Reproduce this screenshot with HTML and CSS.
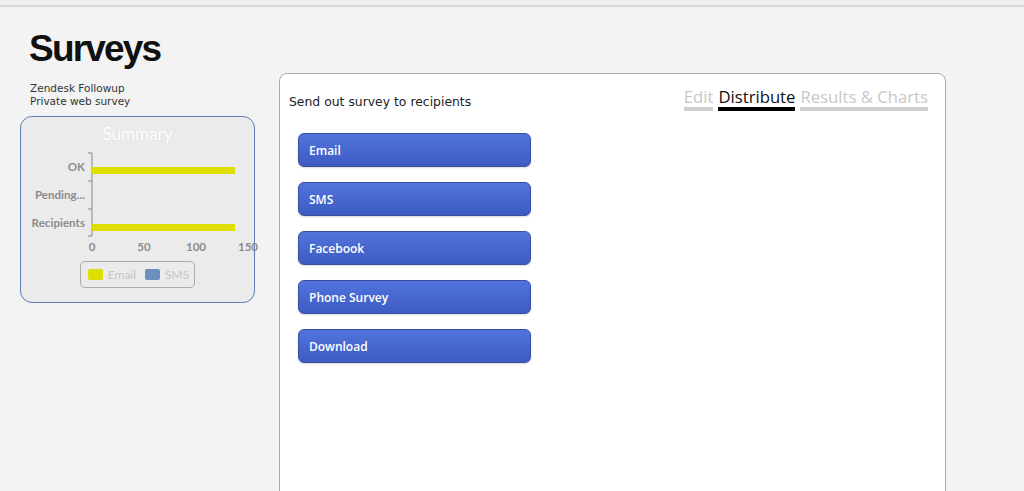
FILE: index.html
```html
<!DOCTYPE html>
<html lang="en">
<head>
  <title>Surveys — Distribute</title>
  <meta charset="utf-8">
  <meta name="viewport" content="width=device-width, initial-scale=1">
  <link rel="stylesheet" href="styles.css">
</head>
<body>
  <div class="topbar"></div>
  <div class="page">
    <h1>Surveys</h1>
    <div class="layout">
      <aside class="sidebar">
        <p class="survey-info">Zendesk Followup<br>Private web survey</p>
        <section class="summary">
          <h2>Summary</h2>
          <svg class="chart" width="234" height="104" viewBox="0 0 234 104">
            <g class="axis">
              <line x1="71" y1="3" x2="71" y2="86"/>
              <line x1="67" y1="3" x2="71" y2="3"/>
              <line x1="67" y1="31" x2="71" y2="31"/>
              <line x1="67" y1="59" x2="71" y2="59"/>
              <line x1="67" y1="86" x2="71" y2="86"/>
            </g>
            <rect class="bar" x="71" y="17" width="143" height="7"/>
            <rect class="bar" x="71" y="74" width="143" height="7"/>
            <g class="labels">
              <text x="64" y="18" text-anchor="end">OK</text>
              <text x="64" y="46" text-anchor="end">Pending...</text>
              <text x="64" y="74" text-anchor="end">Recipients</text>
              <text x="71" y="98" text-anchor="middle">0</text>
              <text x="123" y="98" text-anchor="middle">50</text>
              <text x="175" y="98" text-anchor="middle">100</text>
              <text x="227" y="98" text-anchor="middle">150</text>
            </g>
          </svg>
          <div class="legend">
            <span class="legend-item"><i class="swatch swatch-email"></i>Email</span>
            <span class="legend-item"><i class="swatch swatch-sms"></i>SMS</span>
          </div>
        </section>
      </aside>

      <main class="panel">
        <div class="panel-head">
          <p class="lead">Send out survey to recipients</p>
          <nav class="tabs">
            <a href="#" class="tab">Edit</a>
            <a href="#" class="tab tab-active">Distribute</a>
            <a href="#" class="tab">Results &amp; Charts</a>
          </nav>
        </div>
        <div class="actions">
          <button type="button" class="button">Email</button>
          <button type="button" class="button">SMS</button>
          <button type="button" class="button">Facebook</button>
          <button type="button" class="button">Phone Survey</button>
          <button type="button" class="button">Download</button>
        </div>
      </main>
    </div>
  </div>
</body>
</html>
```

FILE: styles.css
```css
*, *::before, *::after {
  margin: 0;
  padding: 0;
  box-sizing: border-box;
}

html, body {
  height: 100%;
  overflow: hidden;
}

body {
  background-color: #F3F3F3;
  color: #222222;
  font-family: "DejaVu Sans", Verdana, sans-serif;
}

.topbar {
  height: 7px;
  background-color: #F0F0F0;
  border-bottom: 2px solid #D9D9D9;
}

.page {
  padding: 22px 0 0 20px;
}

h1 {
  padding-left: 9px;
  font-family: "Liberation Sans", Arial, sans-serif;
  font-size: 37px;
  line-height: 40px;
  font-weight: 700;
  letter-spacing: -1.8px;
  color: #111111;
}

.layout {
  display: flex;
  align-items: flex-start;
  gap: 24px;
  margin-top: 4px;
}

.sidebar {
  width: 235px;
  padding-top: 9px;
}

.survey-info {
  padding-left: 10px;
  font-size: 10.5px;
  line-height: 12.5px;
  color: #333333;
}

.summary {
  display: flex;
  flex-direction: column;
  height: 187px;
  margin-top: 9px;
  border: 1px solid #5E7DB2;
  border-radius: 12px;
  background-color: #EBEBEB;
}

.summary h2 {
  flex: none;
  height: 33px;
  padding-top: 1px;
  font-family: Lato, sans-serif;
  font-size: 17px;
  font-weight: 400;
  line-height: 32px;
  text-align: center;
  color: #FFFFFF;
  text-shadow: 0 0 2px rgba(0, 0, 0, 0.08);
}

.chart {
  display: block;
  flex: none;
  overflow: visible;
}

.axis line {
  stroke: #8A8A8A;
  stroke-width: 1;
}

.bar {
  fill: #DEDE00;
}

.labels text {
  font-family: Lato, sans-serif;
  font-size: 11.6px;
  font-weight: 700;
  fill: #8C8C8C;
  dominant-baseline: middle;
}

.legend {
  display: flex;
  align-items: center;
  gap: 9px;
  align-self: center;
  height: 27px;
  margin-top: 7px;
  padding: 0 5px 0 7px;
  border: 1px solid #ABABAB;
  border-radius: 5px;
  font-family: Lato, sans-serif;
  font-size: 12px;
  line-height: 1;
  color: #C6C6C6;
}

.legend-item {
  display: flex;
  align-items: center;
  gap: 5px;
}

.swatch {
  display: block;
  width: 15px;
  height: 11px;
  border-radius: 2px;
}

.swatch-email {
  background-color: #DEDE00;
}

.swatch-sms {
  background-color: #6C8FC0;
}

.panel {
  width: 667px;
  height: 460px;
  padding: 14px 17px 0 9px;
  border: 1px solid #ABABAB;
  border-radius: 8px;
  background-color: #FFFFFF;
}

.panel-head {
  display: flex;
  justify-content: space-between;
  align-items: center;
}

.lead {
  padding-top: 4px;
  font-size: 12.4px;
  color: #222222;
}

.tabs {
  display: flex;
  gap: 5px;
}

.tab {
  padding-bottom: 1px;
  border-bottom: 4px solid #CFCFCF;
  font-family: "Open Sans", sans-serif;
  font-size: 16.7px;
  line-height: 18px;
  color: #C8C8C8;
  text-decoration: none;
}

.tab-active {
  border-bottom-color: #000000;
  color: #111111;
}

.actions {
  display: flex;
  flex-direction: column;
  gap: 15px;
  margin: 22px 0 0 9px;
}

.button {
  width: 233px;
  height: 34px;
  padding: 0 10px;
  border: 1px solid #3A4FA3;
  border-radius: 6px;
  background: linear-gradient(#5174DC, #3D5BC3);
  color: #FFFFFF;
  font-family: "Open Sans", sans-serif;
  font-size: 12px;
  font-weight: 600;
  text-align: left;
  box-shadow: 0 1px 2px rgba(0, 0, 0, 0.15);
  cursor: pointer;
}
```
